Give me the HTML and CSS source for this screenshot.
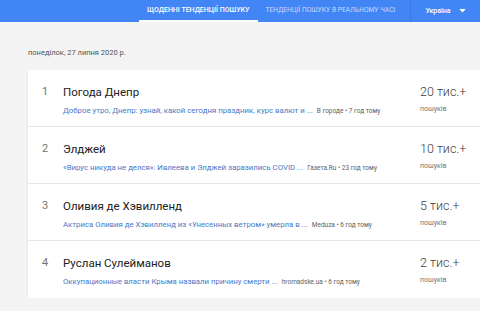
FILE: index.html
```html
<!DOCTYPE html>
<html lang="uk">
<head>
    <meta charset="UTF-8">
    <meta name="viewport" content="width=device-width, initial-scale=1.0">
    <title>Google Trends</title>
    <link rel="stylesheet" href="styles.css">
</head>
<body>
    <header class="top-bar">
        <nav class="tabs">
            <div class="tab active">Щоденні тенденції пошуку</div>
            <div class="tab">Тенденції пошуку в реальному часі</div>
        </nav>
        <div class="geo">
            <span>Україна</span>
            <svg class="caret" width="7" height="4" viewBox="0 0 8 5"><path d="M0 0h8L4 4.5z" fill="#fff"/></svg>
        </div>
    </header>

    <main class="content">
        <div class="date">понеділок, 27 липня 2020 р.</div>
        <div class="card">
            <div class="row">
                <div class="num">1</div>
                <div class="details">
                    <div class="title">Погода Днепр</div>
                    <div class="summary"><span class="snippet">Доброе утро, Днепр: узнай, какой сегодня праздник, курс валют и ...</span><span class="source">В городе • 7 год тому</span></div>
                </div>
                <div class="count">
                    <div class="value">20 тис.+</div>
                    <div class="label">пошуків</div>
                </div>
            </div>
            <div class="row">
                <div class="num">2</div>
                <div class="details">
                    <div class="title">Элджей</div>
                    <div class="summary"><span class="snippet">«Вирус никуда не делся»: Ивлеева и Элджей заразились COVID ...</span><span class="source">Газета.Ru • 23 год тому</span></div>
                </div>
                <div class="count">
                    <div class="value">10 тис.+</div>
                    <div class="label">пошуків</div>
                </div>
            </div>
            <div class="row">
                <div class="num">3</div>
                <div class="details">
                    <div class="title">Оливия де Хэвилленд</div>
                    <div class="summary"><span class="snippet">Актриса Оливия де Хэвилленд из «Унесенных ветром» умерла в ...</span><span class="source">Meduza • 6 год тому</span></div>
                </div>
                <div class="count">
                    <div class="value">5 тис.+</div>
                    <div class="label">пошуків</div>
                </div>
            </div>
            <div class="row">
                <div class="num">4</div>
                <div class="details">
                    <div class="title">Руслан Сулейманов</div>
                    <div class="summary"><span class="snippet">Оккупационные власти Крыма назвали причину смерти ...</span><span class="source">hromadske.ua • 6 год тому</span></div>
                </div>
                <div class="count">
                    <div class="value">2 тис.+</div>
                    <div class="label">пошуків</div>
                </div>
            </div>
        </div>
    </main>
</body>
</html>
```
FILE: styles.css
```css
body {
    margin: 0;
    background: #f4f4f4;
    font-family: Roboto, "Liberation Sans", sans-serif;
    overflow: hidden;
}
.top-bar {
    display: flex;
    align-items: stretch;
    height: 22px;
    background: #4285f4;
    color: #fff;
}
.tabs {
    display: flex;
    margin-left: 139px;
}
.tab {
    display: flex;
    align-items: center;
    padding: 0 8px;
    font-size: 7px;
    font-weight: 500;
    text-transform: uppercase;
    color: rgba(255, 255, 255, 0.7);
    border-bottom: 2px solid transparent;
    box-sizing: border-box;
}
.tab + .tab {
    font-size: 6.7px;
    font-weight: 400;
}
.tab.active {
    color: #fff;
    border-bottom-color: #fff;
}
.geo {
    display: flex;
    align-items: center;
    gap: 8px;
    margin-left: 7px;
    padding-left: 14px;
    border-left: 1px solid rgba(0, 0, 0, 0.08);
    font-size: 7px;
    font-weight: 500;
}
.content {
    padding-left: 28px;
}
.date {
    margin-top: 26px;
    height: 10px;
    font-size: 7.5px;
    line-height: 10px;
    color: #555;
}
.card {
    margin-top: 12px;
    background: #fff;
    box-shadow: 0 1px 2px rgba(0, 0, 0, 0.12);
}
.row {
    display: flex;
    height: 57px;
    box-sizing: border-box;
    padding-top: 14px;
    border-bottom: 1px solid #e6e6e6;
}
.row:last-child {
    border-bottom: none;
}
.num {
    width: 35px;
    box-sizing: border-box;
    padding-left: 14px;
    font-size: 11px;
    line-height: 16px;
    color: #757575;
}
.details {
    width: 357px;
}
.title {
    font-size: 11.5px;
    line-height: 16px;
    color: #212121;
}
.summary {
    margin-top: 2px;
    line-height: 12px;
    white-space: nowrap;
}
.snippet {
    font-size: 7.8px;
    color: #4a78c6;
}
.source {
    margin-left: 4px;
    font-size: 6.5px;
    color: #616161;
}
.count .value {
    font-size: 12.5px;
    font-weight: 300;
    line-height: 16px;
    color: #3c3c3c;
}
.count .label {
    margin-top: 3px;
    font-size: 7px;
    line-height: 12px;
    color: #757575;
}
```
